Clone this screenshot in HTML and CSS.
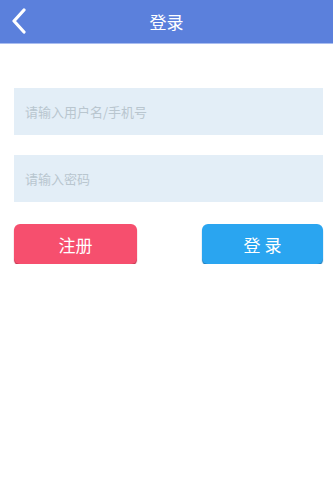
FILE: index.html
```html
<!DOCTYPE html>
<html lang="zh">
<head>
<meta charset="utf-8">
<title>登录</title>
<link rel="stylesheet" href="styles.css">
</head>
<body>
<header class="topbar">
  <span class="back">
    <svg width="16" height="26" viewBox="0 0 16 26"><path d="M13 2 L3 13 L13 24" fill="none" stroke="#fff" stroke-width="3.2" stroke-linecap="round" stroke-linejoin="round"/></svg>
  </span>
  <h1 class="title">登录</h1>
</header>
<main class="form">
  <div class="field">请输入用户名/手机号</div>
  <div class="field">请输入密码</div>
  <div class="actions">
    <button class="btn btn-reg">注册</button>
    <button class="btn btn-login">登 录</button>
  </div>
</main>
</body>
</html>
```
FILE: styles.css
```css
html, body {
  margin: 0;
  padding: 0;
  background: #fff;
  font-family: "Noto Sans CJK SC", "Noto Sans", sans-serif;
}
.topbar {
  height: 43px;
  background: #5b80dc;
  border-bottom: 1px solid #a9bdf0;
  display: flex;
  align-items: center;
  justify-content: center;
  position: relative;
}
.back {
  position: absolute;
  left: 11px;
  top: 8px;
  display: flex;
}
.title {
  margin: 0;
  font-size: 17px;
  font-weight: normal;
  color: #fff;
}
.form {
  padding: 44px 10px 0 14px;
  display: flex;
  flex-direction: column;
  gap: 20px;
}
.field {
  height: 47px;
  background: #e3eef7;
  color: #b9c6cf;
  font-size: 13px;
  display: flex;
  align-items: center;
  padding-left: 11px;
}
.actions {
  display: flex;
  justify-content: space-between;
  margin-top: 2px;
}
.btn {
  width: 123px;
  height: 40px;
  border: none;
  border-radius: 6px;
  color: #fff;
  font-family: inherit;
  font-size: 17px;
  padding: 0;
}
.btn-reg {
  background: #f64f6e;
  box-shadow: 0 2px 1px #c93550;
}
.btn-login {
  width: 121px;
  background: #2aa5f0;
  box-shadow: 0 2px 1px #1c7fc0;
}
```
